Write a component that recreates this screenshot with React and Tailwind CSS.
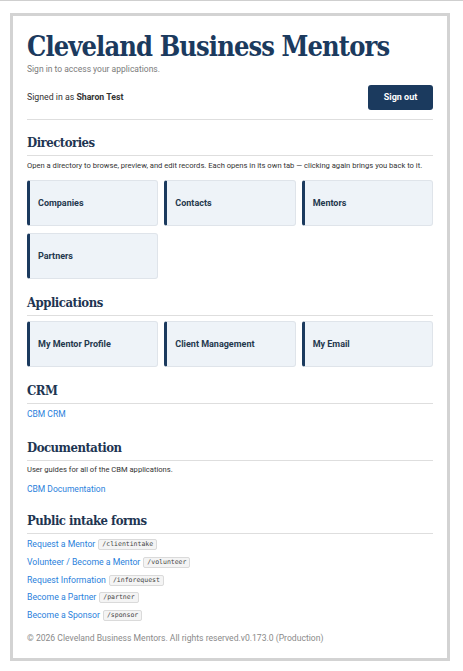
import React from "react";

const serif = {
  fontFamily: '"DejaVu Serif Condensed", "DejaVu Serif", "Liberation Serif", serif',
  fontStretch: "condensed",
};

function Tile({ label }) {
  return (
    <a
      href="#"
      className="flex h-[46px] items-center rounded-[3px] border border-[#dfe4ea] border-l-[3px] border-l-[#1b3a5e] bg-[#eef3f8] pl-[8px] text-[9px] font-bold leading-[12px] text-[#24384d]"
    >
      {label}
    </a>
  );
}

function SectionHeading({ children, className = "" }) {
  return (
    <h2
      style={serif}
      className={`border-b border-[#dedede] pb-[3px] text-[13px] font-bold leading-[18px] tracking-[-0.5px] text-[#1e3552] ${className}`}
    >
      {children}
    </h2>
  );
}

function FormLink({ label, path }) {
  return (
    <div className="flex h-[17.7px] items-center gap-[3px]">
      <a href="#" className="text-[8.7px] leading-[11px] text-[#2b7fdc]">
        {label}
      </a>
      <code
        className="rounded-[2px] border border-[#dadada] bg-[#f4f4f4] px-[3px] text-[6.5px] leading-[9px] text-[#444]"
        style={{ fontFamily: '"DejaVu Sans Mono", monospace' }}
      >
        {path}
      </code>
    </div>
  );
}

export default function App() {
  const directories = ["Companies", "Contacts", "Mentors", "Partners"];
  const apps = ["My Mentor Profile", "Client Management", "My Email"];
  const forms = [
    ["Request a Mentor", "/clientintake"],
    ["Volunteer / Become a Mentor", "/volunteer"],
    ["Request Information", "/inforequest"],
    ["Become a Partner", "/partner"],
    ["Become a Sponsor", "/sponsor"],
  ];

  return (
    <div
      className="min-h-[671px] border-t border-[#cfcfcf] bg-white pl-[10px] pr-[13px] pt-[12px]"
      style={{ fontFamily: 'Roboto, "Liberation Sans", sans-serif' }}
    >
      <div className="border-[3px] border-[#d3d3d3] bg-white px-[14px] pb-[14px] pt-[14px]">
        <header>
          <h1
            style={serif}
            className="whitespace-nowrap text-[27px] font-bold leading-[34px] tracking-[-0.9px] text-[#1b3a5e]"
          >
            Cleveland Business Mentors
          </h1>
          <p className="mt-[0px] text-[8.5px] leading-[11px] text-[#7b7b7b]">
            Sign in to access your applications.
          </p>
          <div className="mt-[10px] flex items-center justify-between border-b border-[#dedede] pb-[9px]">
            <span className="text-[8.75px] leading-[11px] text-[#333]">
              Signed in as <strong className="font-bold">Sharon Test</strong>
            </span>
            <button className="h-[25px] w-[65px] rounded-[3px] bg-[#1b3a5e] text-[9px] font-bold text-white">
              Sign out
            </button>
          </div>
        </header>

        <section className="mt-[14px]">
          <SectionHeading>Directories</SectionHeading>
          <p className="mt-[5px] text-[7.6px] leading-[10px] text-[#333]">
            Open a directory to browse, preview, and edit records. Each opens in its own tab — clicking again brings you back to it.
          </p>
          <div className="mt-[9px] grid grid-cols-3 gap-x-[6px] gap-y-[7px]">
            {directories.map((d) => (
              <Tile key={d} label={d} />
            ))}
          </div>
        </section>

        <section className="mt-[15px]">
          <SectionHeading>Applications</SectionHeading>
          <div className="mt-[5px] grid grid-cols-3 gap-x-[6px]">
            {apps.map((a) => (
              <Tile key={a} label={a} />
            ))}
          </div>
        </section>

        <section className="mt-[15px]">
          <SectionHeading>CRM</SectionHeading>
          <a href="#" className="mt-[5px] block text-[8.5px] leading-[11px] text-[#2b7fdc]">
            CBM CRM
          </a>
        </section>

        <section className="mt-[19px]">
          <SectionHeading>Documentation</SectionHeading>
          <p className="mt-[4px] text-[7.6px] leading-[10px] text-[#333]">
            User guides for all of the CBM applications.
          </p>
          <a href="#" className="mt-[9px] block text-[8.5px] leading-[11px] text-[#2b7fdc]">
            CBM Documentation
          </a>
        </section>

        <section className="mt-[17px]">
          <SectionHeading>Public intake forms</SectionHeading>
          <div className="mt-[2px] flex flex-col">
            {forms.map(([label, path]) => (
              <FormLink key={path} label={label} path={path} />
            ))}
          </div>
        </section>

        <footer className="mt-[8px] text-[8.6px] leading-[12px] text-[#8a8a8a]">
          © 2026 Cleveland Business Mentors. All rights reserved.v0.173.0 (Production)
        </footer>
      </div>
    </div>
  );
}
